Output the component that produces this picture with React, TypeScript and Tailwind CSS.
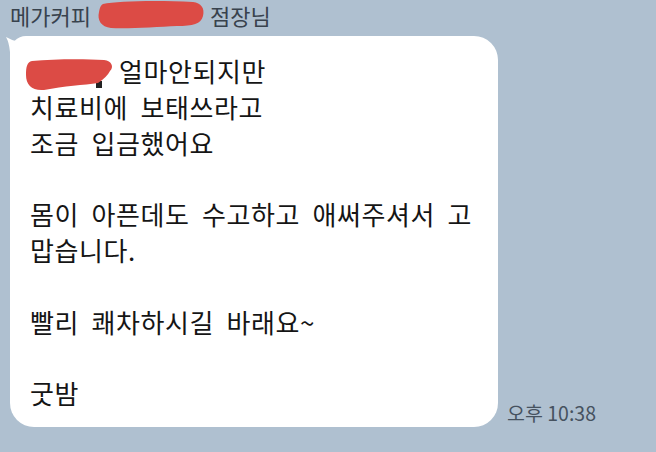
import React from "react";

function NameRedact() {
  return (
    <svg width="108" height="30" viewBox="0 0 108 30" className="inline-block align-top" aria-hidden>
      <path
        d="M6 4 C 20 1, 60 0, 96 2 C 104 3, 108 8, 106 16 C 104 24, 96 26, 80 26 C 60 27, 30 29, 14 28 C 4 27, 0 20, 2 12 C 3 7, 4 5, 6 4 Z"
        fill="#dc4b45"
      />
    </svg>
  );
}

function BubbleRedact() {
  return (
    <svg width="90" height="32" viewBox="0 0 90 32" className="inline-block" aria-hidden>
      <rect x="72" y="22" width="6" height="7" fill="#222" />
      <path
        d="M8 2 C 30 0, 60 0, 80 1 C 88 2, 90 8, 86 12 C 84 16, 80 20, 74 24 C 60 26, 40 27, 20 31 C 8 32, 2 26, 2 16 C 2 8, 3 3, 8 2 Z"
        fill="#dc4b45"
      />
    </svg>
  );
}

export default function App() {
  return (
    <div
      className="w-[656px] h-[452px] bg-[#afc0d0] overflow-hidden"
      style={{ fontFamily: '"Noto Sans CJK KR", "Noto Sans", sans-serif' }}
    >
      <div className="h-[36px] pl-[10px] pt-[1px] text-[22px] leading-[28px] text-[#38424d] flex items-start whitespace-nowrap">
        <span>메가커피</span>
        <span className="ml-[6px] -mt-[1px]">
          <NameRedact />
        </span>
        <span className="ml-[5px]">점장님</span>
      </div>
      <div className="flex items-end gap-[9px] pl-[10px]">
        <div className="relative w-[488px] h-[391px] bg-white rounded-[24px] rounded-tl-[16px] pl-[20px] pt-[17px] text-[26px] leading-[35.8px] tracking-[0.6px] [word-spacing:6px] text-[#151515] whitespace-nowrap">
          <svg
            width="20"
            height="18"
            viewBox="0 0 20 18"
            className="absolute -left-[5px] top-0"
            aria-hidden
          >
            <path d="M1 1 Q 8 5 14 6 L 14 16 L 5 16 Q 4 6 1 1 Z" fill="#ffffff" />
          </svg>
          <div className="flex items-center h-[35.8px]">
            <span className="-ml-[6px] mt-[2px]">
              <BubbleRedact />
            </span>
            <span className="ml-[5px]">얼마안되지만</span>
          </div>
          <div>치료비에 보태쓰라고</div>
          <div>조금 입금했어요</div>
          <div className="h-[35.8px]" />
          <div>몸이 아픈데도 수고하고 애써주셔서 고</div>
          <div>맙습니다.</div>
          <div className="h-[35.8px]" />
          <div>빨리 쾌차하시길 바래요~</div>
          <div className="h-[35.8px]" />
          <div>굿밤</div>
        </div>
        <span className="mb-[1px] text-[19.5px] leading-[26px] text-[#46525f] whitespace-nowrap">
          오후 10:38
        </span>
      </div>
    </div>
  );
}
